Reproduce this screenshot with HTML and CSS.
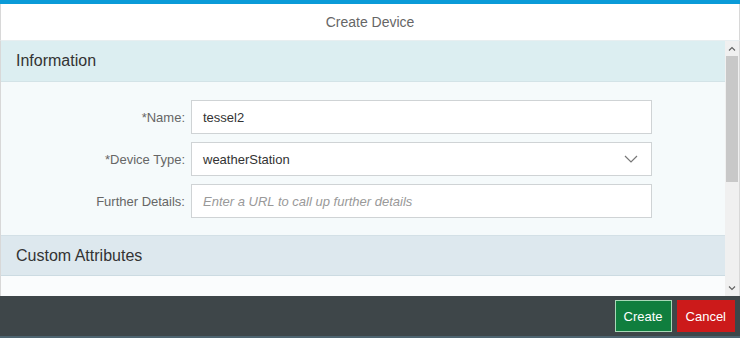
FILE: index.html
```html
<!DOCTYPE html>
<html lang="en">
<head>
    <meta charset="UTF-8">
    <title>Create Device</title>
    <link rel="stylesheet" href="styles.css">
</head>
<body>
    <div class="dialog">
        <div class="dialog-header">Create Device</div>

        <div class="dialog-main">
            <div class="dialog-body">
                <div class="section-title">Information</div>
                <div class="form">
                    <label class="form-label"><span class="req">*</span>Name:</label>
                    <div class="input">tessel2</div>

                    <label class="form-label"><span class="req">*</span>Device Type:</label>
                    <div class="input select">
                        <span>weatherStation</span>
                        <svg class="chevron" width="14" height="8" viewBox="0 0 14 8">
                            <path d="M1 1 L7 7 L13 1" fill="none" stroke="#777" stroke-width="1.2"/>
                        </svg>
                    </div>

                    <label class="form-label">Further Details:</label>
                    <div class="input placeholder">Enter a URL to call up further details</div>
                </div>

                <div class="section-title attrs">Custom Attributes</div>
                <div class="attrs-body">
                    <!-- attributes list -->
                </div>
            </div>

            <!-- scrollbar of the body -->
            <div class="scrollbar">
                <div class="scroll-arrow">
                    <svg width="8" height="5" viewBox="0 0 8 5"><path d="M1 4.5 L4 1.5 L7 4.5" fill="none" stroke="#606060" stroke-width="1.1"/></svg>
                </div>
                <div class="scroll-track">
                    <div class="scroll-thumb"></div>
                </div>
                <div class="scroll-arrow">
                    <svg width="8" height="5" viewBox="0 0 8 5"><path d="M1 0.5 L4 3.5 L7 0.5" fill="none" stroke="#606060" stroke-width="1.1"/></svg>
                </div>
            </div>
        </div>

        <div class="dialog-footer">
            <button class="btn btn-create">Create</button>
            <button class="btn btn-cancel">Cancel</button>
        </div>
    </div>
</body>
</html>
```

FILE: styles.css
```css
body {
    margin: 0;
    font-family: "Liberation Sans", Arial, sans-serif;
    background-color: #fff;
}

.dialog {
    width: 740px;
    height: 338px;
    display: flex;
    flex-direction: column;
    border-top: 4px solid #0a9bd8;
    box-sizing: border-box;
}

.dialog-header {
    height: 37px;
    flex: 0 0 auto;
    display: flex;
    align-items: center;
    justify-content: center;
    font-size: 14px;
    color: #666;
    border-left: 1px solid #d8d8d8;
    border-right: 1px solid #d8d8d8;
    border-bottom: 1px solid #e8eef0;
    box-sizing: border-box;
    background-color: #fff;
}

.dialog-main {
    flex: 1;
    display: flex;
    min-height: 0;
    border-left: 1px solid #d8d8d8;
    border-right: 1px solid #d8d8d8;
}

.dialog-body {
    flex: 1;
    overflow: hidden;
    background-color: #fafcfd;
}

.section-title {
    height: 41px;
    display: flex;
    align-items: center;
    padding-left: 15px;
    font-size: 16px;
    color: #333;
    background-color: #dceef1;
    border-bottom: 1px solid #d3e3e7;
    box-sizing: border-box;
}

.section-title.attrs {
    background-color: #dde8ee;
    border-top: 1px solid #d3e0e6;
    border-bottom: 1px solid #ccdbe2;
}

.form {
    display: grid;
    grid-template-columns: 184px 461px;
    column-gap: 6px;
    row-gap: 8px;
    padding: 18px 0 17px 0;
    background-color: #f5fafb;
}

.form-label {
    display: flex;
    align-items: center;
    justify-content: flex-end;
    font-size: 13px;
    color: #666;
}

.req {
    color: #666;
}

.input {
    height: 34px;
    display: flex;
    align-items: center;
    padding: 0 11px;
    background-color: #fff;
    border: 1px solid #cfd3d5;
    box-sizing: border-box;
    font-size: 13px;
    color: #333;
}

.select {
    justify-content: space-between;
}

.chevron {
    margin-right: 2px;
}

.placeholder {
    color: #999;
    font-style: italic;
}

.attrs-body {
    height: 190px;
    background-color: #fafcfd;
}

/* Scrollbar */
.scrollbar {
    width: 14px;
    flex: 0 0 auto;
    display: flex;
    flex-direction: column;
    background-color: #f0f0f0;
}

.scroll-arrow {
    height: 15px;
    display: flex;
    align-items: center;
    justify-content: center;
}

.scroll-track {
    flex: 1;
}

.scroll-thumb {
    height: 126px;
    margin: 0 1px;
    background-color: #c8c8c8;
}

.dialog-footer {
    height: 42px;
    flex: 0 0 auto;
    display: flex;
    align-items: center;
    justify-content: flex-end;
    gap: 5px;
    padding-right: 5px;
    background-color: #3e4649;
    border-bottom: 2px solid #4d6470;
    box-sizing: border-box;
}

.btn {
    height: 32px;
    padding: 0 8px;
    font-family: "Liberation Sans", Arial, sans-serif;
    font-size: 13px;
    color: #fff;
    border: 1px solid transparent;
    cursor: pointer;
}

.btn-create {
    background-color: #107e3e;
    border-color: #a9d8b8;
}

.btn-cancel {
    background-color: #cc1a1a;
    border-color: #cc1a1a;
}
```
